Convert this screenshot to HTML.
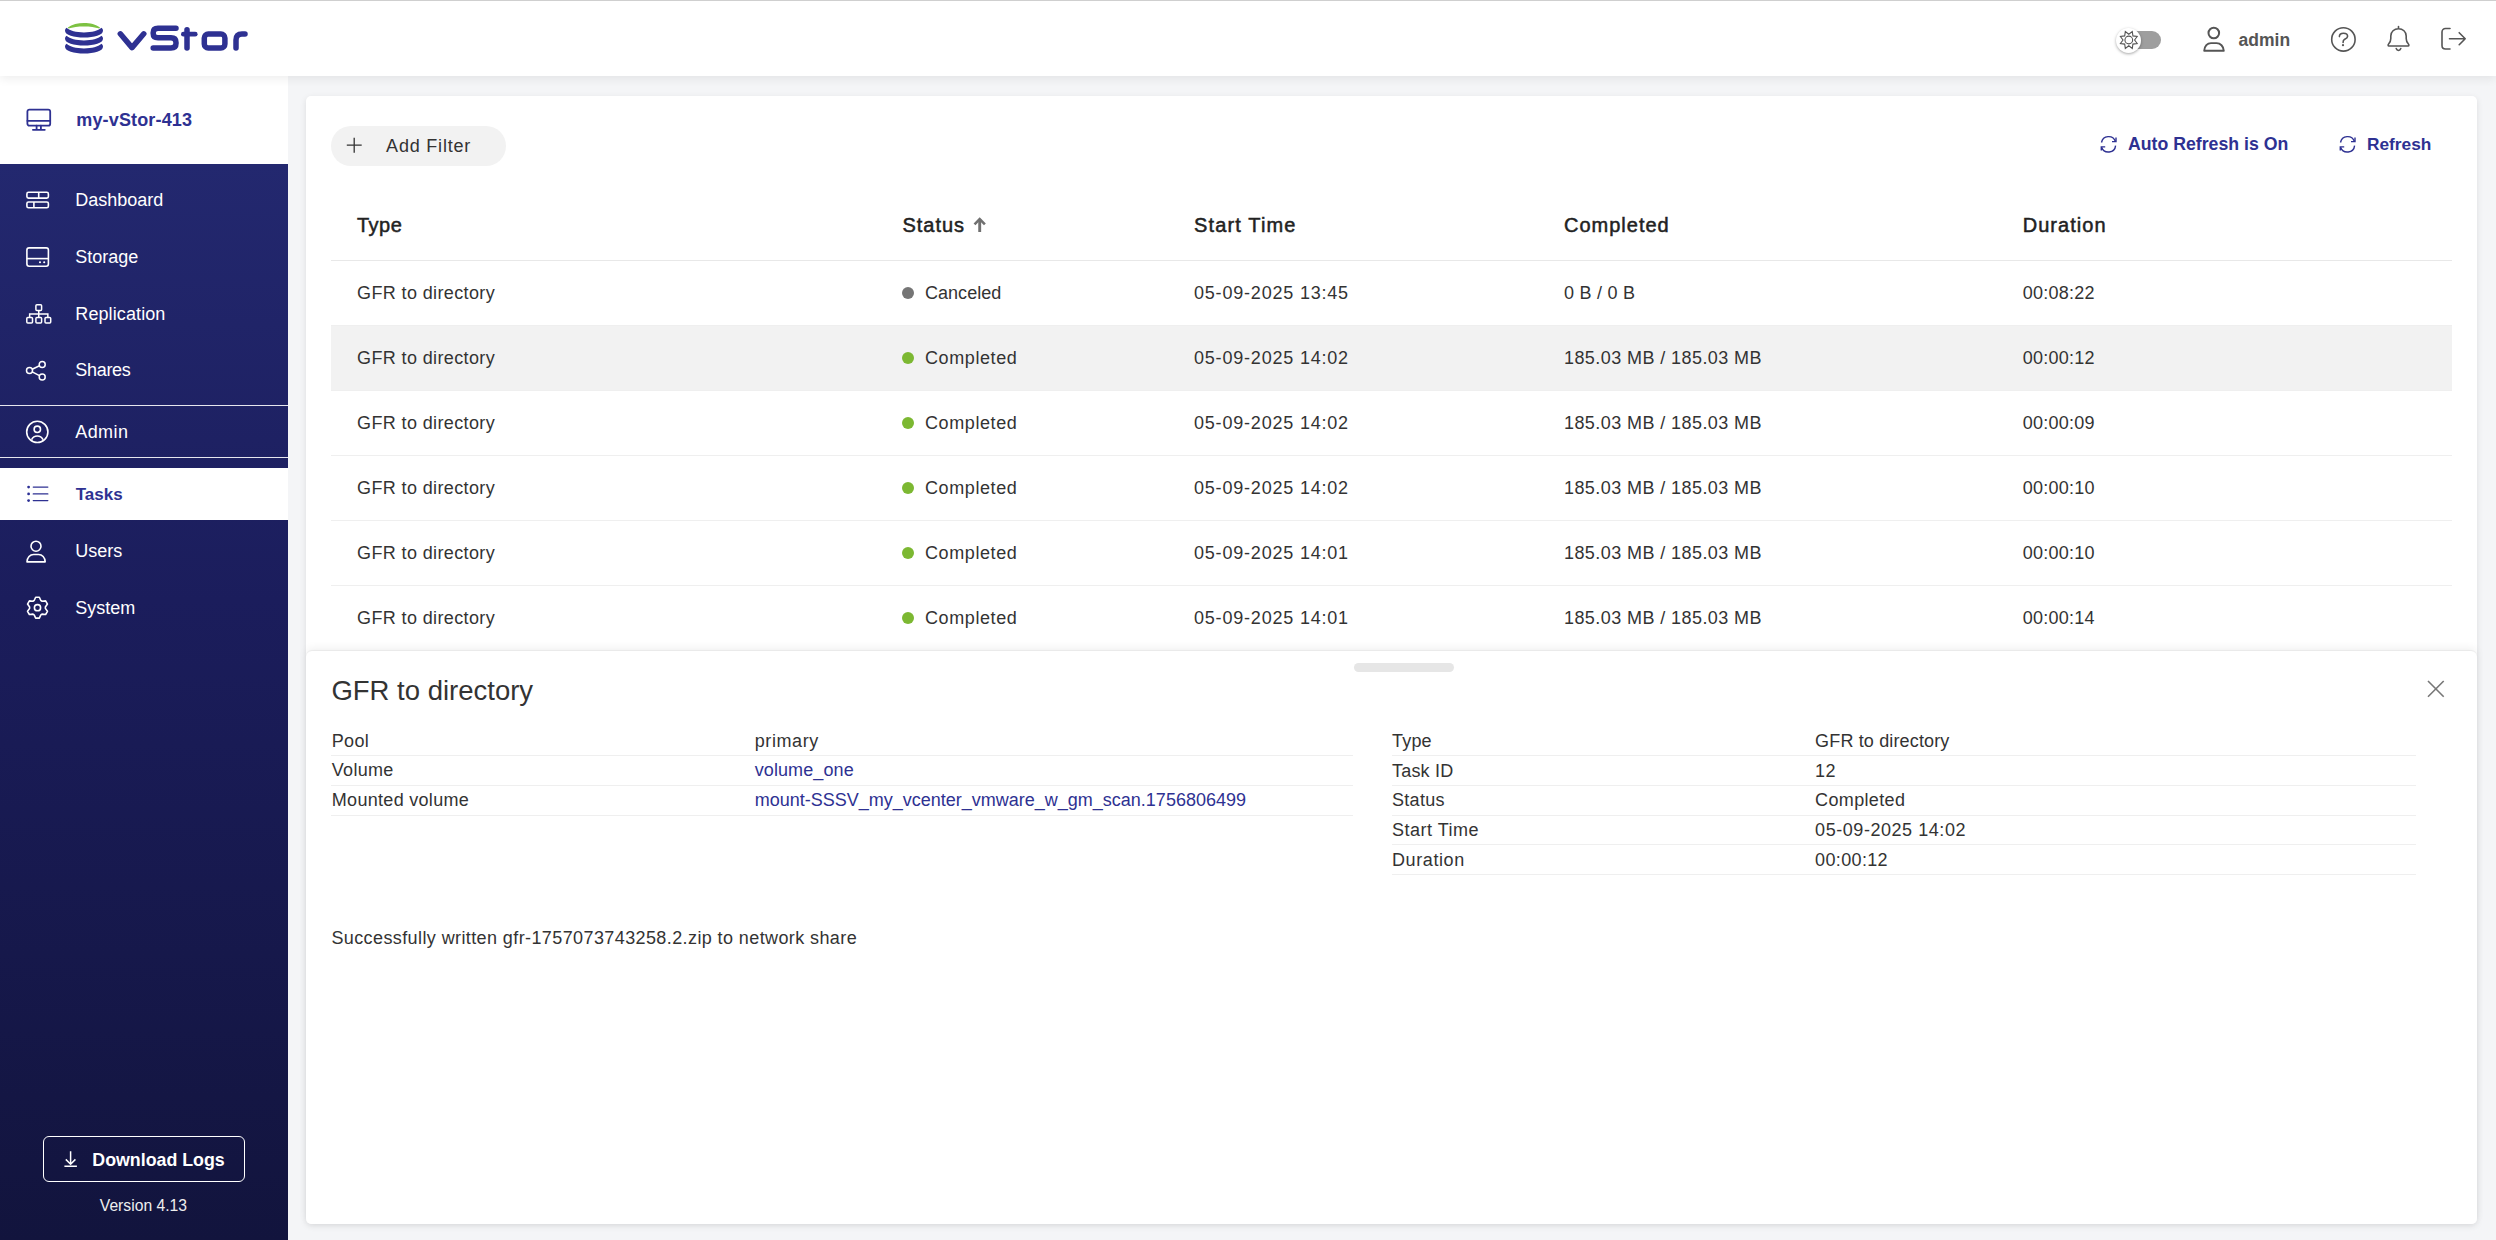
<!DOCTYPE html>
<html><head><meta charset="utf-8"><title>vStor Tasks</title><style>
*{margin:0;padding:0;box-sizing:border-box}
html,body{width:2496px;height:1240px;overflow:hidden;background:#f4f5f7;font-family:"Liberation Sans",sans-serif}
.abs{position:absolute}
.t{position:absolute;line-height:1;white-space:nowrap}
#topline{position:absolute;left:0;top:0;width:2496px;height:1px;background:#cfcfcf}
#hdr{position:absolute;left:0;top:0;width:2496px;height:76px;background:#fff;box-shadow:0 3px 9px rgba(0,0,0,.07)}
#sb{position:absolute;left:0;top:76px;width:288px;height:1164px;background:linear-gradient(to bottom,#fff 0,#fff 88px,#23286f 88px,#1b1d5c 45%,#12143d 100%)}
#card{position:absolute;left:306px;top:96px;width:2171px;height:1128px;background:#fff;border-radius:5px;box-shadow:0 2px 6px rgba(0,0,0,.1)}
#panel{position:absolute;left:306px;top:651px;width:2171px;height:573px;background:#fff;border-radius:6px;box-shadow:0 -1px 1px rgba(0,0,0,.05),0 -3px 8px rgba(0,0,0,.06)}
</style></head><body>
<div id="sb"></div>
<svg class="abs" style="left:24px;top:106px" width="30" height="28" viewBox="0 0 30 28">
<rect x="3.4" y="3.6" width="22.8" height="16.1" rx="2" fill="none" stroke="#2e3192" stroke-width="1.8"/>
<path d="M3.4,14.8 H26.2 M12.6,19.7 V23.2 M16.9,19.7 V23.2 M8.9,23.8 H20.8" fill="none" stroke="#2e3192" stroke-width="1.8" stroke-linecap="round"/>
</svg>
<div class="t" style="left:76.3px;top:110.96px;font-size:18px;font-weight:700;color:#2e3192;letter-spacing:0.15px;">my-vStor-413</div>
<svg class="abs" style="left:24px;top:188px" width="28" height="24" viewBox="0 0 28 24">
<rect x="2.9" y="4.3" width="21.5" height="5.8" rx="1.6" fill="none" stroke="#fff" stroke-width="1.6"/>
<rect x="2.9" y="14" width="21.5" height="5.8" rx="1.6" fill="none" stroke="#fff" stroke-width="1.6"/>
<path d="M14.7,4.3 V10.1 M9.9,14 V19.8" stroke="#fff" stroke-width="1.6"/>
</svg>
<div class="t" style="left:75.3px;top:190.76px;font-size:18px;font-weight:400;color:#fff;">Dashboard</div>
<svg class="abs" style="left:24px;top:244px" width="28" height="26" viewBox="0 0 28 26">
<rect x="2.9" y="3.9" width="21.5" height="18.4" rx="2.2" fill="none" stroke="#fff" stroke-width="1.6"/>
<path d="M2.9,14.6 H24.4" stroke="#fff" stroke-width="1.6"/>
<circle cx="16" cy="18.2" r="1.05" fill="#fff"/><circle cx="20.2" cy="18.2" r="1.05" fill="#fff"/>
</svg>
<div class="t" style="left:75.3px;top:248.36px;font-size:18px;font-weight:400;color:#fff;">Storage</div>
<svg class="abs" style="left:24px;top:301px" width="30" height="26" viewBox="0 0 30 26">
<g fill="none" stroke="#fff" stroke-width="1.5">
<rect x="11.9" y="3.8" width="5.7" height="5.6" rx="1"/>
<rect x="2.8" y="16.4" width="5.7" height="5.6" rx="1"/>
<rect x="11.9" y="16.4" width="5.7" height="5.6" rx="1"/>
<rect x="21" y="16.4" width="5.7" height="5.6" rx="1"/>
<path d="M14.75,9.4 V16.4 M5.65,16.4 V12.9 H23.85 V16.4"/>
</g>
</svg>
<div class="t" style="left:75.3px;top:305.06px;font-size:18px;font-weight:400;color:#fff;letter-spacing:0.1px;">Replication</div>
<svg class="abs" style="left:24px;top:357px" width="26" height="26" viewBox="0 0 26 26">
<g fill="none" stroke="#fff" stroke-width="1.5">
<circle cx="5.5" cy="13.6" r="3"/><circle cx="18.2" cy="7.5" r="3"/><circle cx="18.2" cy="20" r="3"/>
<path d="M8.2,12.3 L15.5,8.8 M8.2,14.9 L15.5,18.7"/>
</g>
</svg>
<div class="t" style="left:75.3px;top:360.96px;font-size:18px;font-weight:400;color:#fff;letter-spacing:-0.3px;">Shares</div>
<div class="abs" style="left:0;top:404.5px;width:288px;height:1.5px;background:#e6e6ee"></div>
<svg class="abs" style="left:24px;top:418px" width="28" height="28" viewBox="0 0 28 28">
<g fill="none" stroke="#fff" stroke-width="1.6">
<circle cx="13.3" cy="13.9" r="10.6"/>
<circle cx="13.3" cy="11.3" r="3.2"/>
<path d="M7.6,21.7 C8.8,19.2 10.8,18 13.3,18 C15.8,18 17.8,19.2 19,21.7"/>
</g>
</svg>
<div class="t" style="left:75.3px;top:422.96px;font-size:18px;font-weight:400;color:#fff;letter-spacing:0.4px;">Admin</div>
<div class="abs" style="left:0;top:456.5px;width:288px;height:1.5px;background:#e6e6ee"></div>
<div class="abs" style="left:0;top:468px;width:288px;height:52px;background:#fff"></div>
<svg class="abs" style="left:24px;top:480px" width="28" height="26" viewBox="0 0 28 26">
<g fill="#2b2f95"><circle cx="4.6" cy="7.1" r="1.4"/><circle cx="4.6" cy="13.9" r="1.4"/><circle cx="4.6" cy="20.6" r="1.4"/></g>
<path d="M9.3,7.1 H23.8 M9.3,13.9 H23.8 M9.3,20.6 H23.8" stroke="#2e3192" stroke-width="1.4" stroke-linecap="round"/>
</svg>
<div class="t" style="left:75.7px;top:485.61px;font-size:17px;font-weight:700;color:#2e3192;">Tasks</div>
<svg class="abs" style="left:24px;top:538px" width="26" height="28" viewBox="0 0 26 28">
<g fill="none" stroke="#fff" stroke-width="1.6">
<circle cx="12" cy="8.2" r="5"/>
<path d="M3,23.9 C3.2,19.6 6,16.5 9.6,16.5 H14.6 C18.2,16.5 21,19.6 21.2,23.9 Z" stroke-linejoin="round"/>
</g>
</svg>
<div class="t" style="left:75.3px;top:542.06px;font-size:18px;font-weight:400;color:#fff;">Users</div>
<svg class="abs" style="left:24px;top:594px" width="28" height="28" viewBox="0 0 28 28">
<g fill="none" stroke="#fff" stroke-width="1.6" stroke-linejoin="round">
<path d="M10.16,6.54 L11.66,3.26 L15.34,3.26 L16.84,6.54 A7.9,7.9 0 0 1 18.03,7.23 L21.62,6.89 L23.46,10.07 L21.37,13.01 A7.9,7.9 0 0 1 21.37,14.39 L23.46,17.33 L21.62,20.51 L18.03,20.17 A7.9,7.9 0 0 1 16.84,20.86 L15.34,24.14 L11.66,24.14 L10.16,20.86 A7.9,7.9 0 0 1 8.97,20.17 L5.38,20.51 L3.54,17.33 L5.63,14.39 A7.9,7.9 0 0 1 5.63,13.01 L3.54,10.07 L5.38,6.89 L8.97,7.23 A7.9,7.9 0 0 1 10.16,6.54 Z"/>
<circle cx="13.5" cy="13.7" r="3.1"/>
</g>
</svg>
<div class="t" style="left:75.3px;top:598.96px;font-size:18px;font-weight:400;color:#fff;">System</div>
<div class="abs" style="left:43px;top:1135.5px;width:202px;height:46.5px;border:1.5px solid #fff;border-radius:6px"></div>
<svg class="abs" style="left:60px;top:1148px" width="22" height="22" viewBox="0 0 22 22">
<path d="M10.6,3.2 V16 M5.8,11.4 L10.6,16.2 L15.4,11.4 M4.4,18.3 H16.9" fill="none" stroke="#fff" stroke-width="1.5"/>
</svg>
<div class="t" style="left:92.3px;top:1151.53px;font-size:17.8px;font-weight:700;color:#fff;">Download Logs</div>
<div class="t" style="left:99.8px;top:1197.71px;font-size:15.7px;font-weight:400;color:#eee;">Version 4.13</div>
<div id="card"></div>
<div class="abs" style="left:331px;top:126px;width:175px;height:40px;border-radius:20px;background:#f2f2f2"></div>
<svg class="abs" style="left:344px;top:135px" width="20" height="20" viewBox="0 0 20 20">
<path d="M10.2,2.8 V17.7 M2.8,10.2 H17.7" stroke="#333" stroke-width="1.3"/>
</svg>
<div class="t" style="left:386.1px;top:137.16px;font-size:18px;font-weight:400;color:#333;letter-spacing:0.8px;">Add Filter</div>
<svg class="abs" style="left:2099px;top:134.6px" width="20" height="20" viewBox="0 0 20 20">
<g fill="none" stroke="#2e3192" stroke-width="1.4" stroke-linecap="butt" stroke-linejoin="miter">
<path d="M2.5,7.5 A7.25,7.25 0 0 1 16.4,6.3"/>
<path d="M16.6,10.6 A7.25,7.25 0 0 1 2.6,12.3"/>
<path d="M17,2.5 V6.6 H13"/>
<path d="M2.3,15.4 V11.9 H6.2"/>
</g>
</svg>
<div class="t" style="left:2128px;top:135.82px;font-size:17.7px;font-weight:700;color:#2e3192;">Auto Refresh is On</div>
<svg class="abs" style="left:2338px;top:134.6px" width="20" height="20" viewBox="0 0 20 20">
<g fill="none" stroke="#2e3192" stroke-width="1.4" stroke-linecap="butt" stroke-linejoin="miter">
<path d="M2.5,7.5 A7.25,7.25 0 0 1 16.4,6.3"/>
<path d="M16.6,10.6 A7.25,7.25 0 0 1 2.6,12.3"/>
<path d="M17,2.5 V6.6 H13"/>
<path d="M2.3,15.4 V11.9 H6.2"/>
</g>
</svg>
<div class="t" style="left:2367px;top:136.16px;font-size:17.3px;font-weight:700;color:#2e3192;">Refresh</div>
<div class="t" style="left:357px;top:215.07px;font-size:20px;font-weight:400;color:#222;letter-spacing:0.5px;-webkit-text-stroke:0.5px #222;">Type</div>
<div class="t" style="left:902.4px;top:215.07px;font-size:20px;font-weight:400;color:#222;letter-spacing:1.0px;-webkit-text-stroke:0.5px #222;">Status</div>
<div class="t" style="left:1194px;top:215.07px;font-size:20px;font-weight:400;color:#222;letter-spacing:1.15px;-webkit-text-stroke:0.5px #222;">Start Time</div>
<div class="t" style="left:1564px;top:215.07px;font-size:20px;font-weight:400;color:#222;letter-spacing:1.0px;-webkit-text-stroke:0.5px #222;">Completed</div>
<div class="t" style="left:2022.7px;top:215.07px;font-size:20px;font-weight:400;color:#222;letter-spacing:1.05px;-webkit-text-stroke:0.5px #222;">Duration</div>
<svg class="abs" style="left:971px;top:216px" width="18" height="18" viewBox="0 0 18 18">
<path d="M8.7,3.2 V16" stroke="#707070" stroke-width="2.9"/>
<path d="M3.5,8.3 L8.7,3.1 L13.9,8.3" fill="none" stroke="#707070" stroke-width="2.6" stroke-linejoin="miter"/>
</svg>
<div class="abs" style="left:331px;top:260px;width:2121px;height:1px;background:#e8e8e8"></div>
<div class="abs" style="left:331px;top:325px;width:2121px;height:65px;background:#f2f2f2"></div>
<div class="abs" style="left:331px;top:325px;width:2121px;height:1px;background:#efefef"></div>
<div class="abs" style="left:331px;top:390px;width:2121px;height:1px;background:#efefef"></div>
<div class="abs" style="left:331px;top:455px;width:2121px;height:1px;background:#efefef"></div>
<div class="abs" style="left:331px;top:520px;width:2121px;height:1px;background:#efefef"></div>
<div class="abs" style="left:331px;top:585px;width:2121px;height:1px;background:#efefef"></div>
<div class="t" style="left:357px;top:283.76px;font-size:18px;font-weight:400;color:#333;letter-spacing:0.38px;">GFR to directory</div>
<div class="abs" style="left:902px;top:287px;width:12px;height:12px;border-radius:50%;background:#757575"></div>
<div class="t" style="left:925px;top:283.76px;font-size:18px;font-weight:400;color:#333;letter-spacing:0.03px;">Canceled</div>
<div class="t" style="left:1194px;top:283.76px;font-size:18px;font-weight:400;color:#333;letter-spacing:0.8px;">05-09-2025 13:45</div>
<div class="t" style="left:1564px;top:283.76px;font-size:18px;font-weight:400;color:#333;letter-spacing:0.25px;">0 B / 0 B</div>
<div class="t" style="left:2022.7px;top:283.76px;font-size:18px;font-weight:400;color:#333;letter-spacing:0.25px;">00:08:22</div>
<div class="t" style="left:357px;top:348.76px;font-size:18px;font-weight:400;color:#333;letter-spacing:0.38px;">GFR to directory</div>
<div class="abs" style="left:902px;top:352px;width:12px;height:12px;border-radius:50%;background:#7cb832"></div>
<div class="t" style="left:925px;top:348.76px;font-size:18px;font-weight:400;color:#333;letter-spacing:0.6px;">Completed</div>
<div class="t" style="left:1194px;top:348.76px;font-size:18px;font-weight:400;color:#333;letter-spacing:0.8px;">05-09-2025 14:02</div>
<div class="t" style="left:1564px;top:348.76px;font-size:18px;font-weight:400;color:#333;letter-spacing:0.42px;">185.03 MB / 185.03 MB</div>
<div class="t" style="left:2022.7px;top:348.76px;font-size:18px;font-weight:400;color:#333;letter-spacing:0.25px;">00:00:12</div>
<div class="t" style="left:357px;top:413.76px;font-size:18px;font-weight:400;color:#333;letter-spacing:0.38px;">GFR to directory</div>
<div class="abs" style="left:902px;top:417px;width:12px;height:12px;border-radius:50%;background:#7cb832"></div>
<div class="t" style="left:925px;top:413.76px;font-size:18px;font-weight:400;color:#333;letter-spacing:0.6px;">Completed</div>
<div class="t" style="left:1194px;top:413.76px;font-size:18px;font-weight:400;color:#333;letter-spacing:0.8px;">05-09-2025 14:02</div>
<div class="t" style="left:1564px;top:413.76px;font-size:18px;font-weight:400;color:#333;letter-spacing:0.42px;">185.03 MB / 185.03 MB</div>
<div class="t" style="left:2022.7px;top:413.76px;font-size:18px;font-weight:400;color:#333;letter-spacing:0.25px;">00:00:09</div>
<div class="t" style="left:357px;top:478.76px;font-size:18px;font-weight:400;color:#333;letter-spacing:0.38px;">GFR to directory</div>
<div class="abs" style="left:902px;top:482px;width:12px;height:12px;border-radius:50%;background:#7cb832"></div>
<div class="t" style="left:925px;top:478.76px;font-size:18px;font-weight:400;color:#333;letter-spacing:0.6px;">Completed</div>
<div class="t" style="left:1194px;top:478.76px;font-size:18px;font-weight:400;color:#333;letter-spacing:0.8px;">05-09-2025 14:02</div>
<div class="t" style="left:1564px;top:478.76px;font-size:18px;font-weight:400;color:#333;letter-spacing:0.42px;">185.03 MB / 185.03 MB</div>
<div class="t" style="left:2022.7px;top:478.76px;font-size:18px;font-weight:400;color:#333;letter-spacing:0.25px;">00:00:10</div>
<div class="t" style="left:357px;top:543.76px;font-size:18px;font-weight:400;color:#333;letter-spacing:0.38px;">GFR to directory</div>
<div class="abs" style="left:902px;top:547px;width:12px;height:12px;border-radius:50%;background:#7cb832"></div>
<div class="t" style="left:925px;top:543.76px;font-size:18px;font-weight:400;color:#333;letter-spacing:0.6px;">Completed</div>
<div class="t" style="left:1194px;top:543.76px;font-size:18px;font-weight:400;color:#333;letter-spacing:0.8px;">05-09-2025 14:01</div>
<div class="t" style="left:1564px;top:543.76px;font-size:18px;font-weight:400;color:#333;letter-spacing:0.42px;">185.03 MB / 185.03 MB</div>
<div class="t" style="left:2022.7px;top:543.76px;font-size:18px;font-weight:400;color:#333;letter-spacing:0.25px;">00:00:10</div>
<div class="t" style="left:357px;top:608.76px;font-size:18px;font-weight:400;color:#333;letter-spacing:0.38px;">GFR to directory</div>
<div class="abs" style="left:902px;top:612px;width:12px;height:12px;border-radius:50%;background:#7cb832"></div>
<div class="t" style="left:925px;top:608.76px;font-size:18px;font-weight:400;color:#333;letter-spacing:0.6px;">Completed</div>
<div class="t" style="left:1194px;top:608.76px;font-size:18px;font-weight:400;color:#333;letter-spacing:0.8px;">05-09-2025 14:01</div>
<div class="t" style="left:1564px;top:608.76px;font-size:18px;font-weight:400;color:#333;letter-spacing:0.42px;">185.03 MB / 185.03 MB</div>
<div class="t" style="left:2022.7px;top:608.76px;font-size:18px;font-weight:400;color:#333;letter-spacing:0.25px;">00:00:14</div>
<div id="panel"></div>
<div class="abs" style="left:1354px;top:662.5px;width:100px;height:9px;border-radius:4.5px;background:#e6e6e6"></div>
<div class="t" style="left:331.4px;top:676.72px;font-size:27.5px;font-weight:400;color:#333;">GFR to directory</div>
<svg class="abs" style="left:2424px;top:677px" width="24" height="24" viewBox="0 0 24 24">
<path d="M4,4 L19.7,19.8 M19.7,4 L4,19.8" stroke="#777" stroke-width="1.6"/>
</svg>
<div class="t" style="left:331.8px;top:731.76px;font-size:18px;font-weight:400;color:#333;letter-spacing:0.3px;">Pool</div>
<div class="t" style="left:754.7px;top:731.76px;font-size:18px;font-weight:400;color:#333;letter-spacing:0.6px;">primary</div>
<div class="abs" style="left:331px;top:755px;width:1022px;height:1px;background:#efefef"></div>
<div class="t" style="left:331.8px;top:761.46px;font-size:18px;font-weight:400;color:#333;letter-spacing:0.3px;">Volume</div>
<div class="t" style="left:754.7px;top:761.46px;font-size:18px;font-weight:400;color:#2e3192;letter-spacing:0.1px;">volume_one</div>
<div class="abs" style="left:331px;top:785px;width:1022px;height:1px;background:#efefef"></div>
<div class="t" style="left:331.8px;top:791.16px;font-size:18px;font-weight:400;color:#333;letter-spacing:0.3px;">Mounted volume</div>
<div class="t" style="left:754.7px;top:791.16px;font-size:18px;font-weight:400;color:#2e3192;">mount-SSSV_my_vcenter_vmware_w_gm_scan.1756806499</div>
<div class="abs" style="left:331px;top:815px;width:1022px;height:1px;background:#efefef"></div>
<div class="t" style="left:1392px;top:732.16px;font-size:18px;font-weight:400;color:#333;letter-spacing:0.2px;">Type</div>
<div class="t" style="left:1815.1px;top:732.16px;font-size:18px;font-weight:400;color:#333;letter-spacing:0.15px;">GFR to directory</div>
<div class="abs" style="left:1392px;top:755.0px;width:1024px;height:1px;background:#efefef"></div>
<div class="t" style="left:1392px;top:761.76px;font-size:18px;font-weight:400;color:#333;letter-spacing:0.2px;">Task ID</div>
<div class="t" style="left:1815.1px;top:761.76px;font-size:18px;font-weight:400;color:#333;letter-spacing:0.35px;">12</div>
<div class="abs" style="left:1392px;top:784.8px;width:1024px;height:1px;background:#efefef"></div>
<div class="t" style="left:1392px;top:791.36px;font-size:18px;font-weight:400;color:#333;letter-spacing:0.3px;">Status</div>
<div class="t" style="left:1815.1px;top:791.36px;font-size:18px;font-weight:400;color:#333;letter-spacing:0.35px;">Completed</div>
<div class="abs" style="left:1392px;top:814.6px;width:1024px;height:1px;background:#efefef"></div>
<div class="t" style="left:1392px;top:820.96px;font-size:18px;font-weight:400;color:#333;letter-spacing:0.5px;">Start Time</div>
<div class="t" style="left:1815.1px;top:820.96px;font-size:18px;font-weight:400;color:#333;letter-spacing:0.55px;">05-09-2025 14:02</div>
<div class="abs" style="left:1392px;top:844.4px;width:1024px;height:1px;background:#efefef"></div>
<div class="t" style="left:1392px;top:850.56px;font-size:18px;font-weight:400;color:#333;letter-spacing:0.6px;">Duration</div>
<div class="t" style="left:1815.1px;top:850.56px;font-size:18px;font-weight:400;color:#333;letter-spacing:0.35px;">00:00:12</div>
<div class="abs" style="left:1392px;top:874.2px;width:1024px;height:1px;background:#efefef"></div>
<div class="t" style="left:331.4px;top:929.26px;font-size:18px;font-weight:400;color:#333;letter-spacing:0.4px;">Successfully written gfr-1757073743258.2.zip to network share</div>
<div id="hdr"></div>
<svg class="abs" style="left:0;top:0" width="260" height="76" viewBox="0 0 260 76">
<path fill="#7dc242" d="M67.8,27.6 C72,24.3 78,23 84,23 C90,23 96,24.3 100,27.6 L99.4,28.6 C95,27 90,26.4 84,26.4 C78,26.4 73,27 68.4,28.6 Z"/>
<g fill="#2e3192">
<path d="M65,30.8 C65,35.2 74,37.6 84,37.6 C94,37.6 103,35.2 103,30.8 C103,29.6 102.5,28.6 101.5,27.8 C98,30.6 92,32.5 84,32.5 C76,32.5 70,30.6 66.5,27.8 C65.5,28.6 65,29.6 65,30.8 Z"/>
<path transform="translate(0,8)" d="M65,30.8 C65,35.2 74,37.6 84,37.6 C94,37.6 103,35.2 103,30.8 C103,29.6 102.5,28.6 101.5,27.8 C98,30.6 92,32.5 84,32.5 C76,32.5 70,30.6 66.5,27.8 C65.5,28.6 65,29.6 65,30.8 Z"/>
<path transform="translate(0,16)" d="M65,30.8 C65,35.2 74,37.6 84,37.6 C94,37.6 103,35.2 103,30.8 C103,29.6 102.5,28.6 101.5,27.8 C98,30.6 92,32.5 84,32.5 C76,32.5 70,30.6 66.5,27.8 C65.5,28.6 65,29.6 65,30.8 Z"/>
</g>
<g fill="none" stroke="#2e3192" stroke-width="5.5" stroke-linecap="round" stroke-linejoin="round">
<path d="M120.3,33.8 L132,47.6 L143.8,33.8"/>
<path d="M176,28.2 H158 Q153.2,28.2 153.2,32.5 V33.5 Q153.2,37.8 158,37.8 H171 Q176,37.8 176,42.5 V43.5 Q176,48 171,48 H153.2"/>
<path d="M187,29.8 V47.9"/>
<path d="M183.4,34.2 H195.2" stroke-width="4.8"/>
<rect x="204.3" y="34.1" width="20.6" height="13.9" rx="4"/>
<path d="M236,47.9 V40 Q236,34 242,34 H245"/>
</g>
</svg>
<div class="abs" style="left:2118px;top:31px;width:43px;height:18px;border-radius:9px;background:#9e9e9e"></div>
<div class="abs" style="left:2116px;top:28px;width:25px;height:25px;border-radius:50%;background:#fff;box-shadow:0 1px 3px rgba(0,0,0,.35)"></div>
<svg class="abs" style="left:2116px;top:28px" width="25" height="25" viewBox="0 0 25 25">
<path fill="none" stroke="#555" stroke-width="1.1" stroke-linejoin="miter" d="M16.28,3.59 L16.90,7.90 L21.21,8.52 L18.60,12.00 L21.21,15.48 L16.90,16.10 L16.28,20.41 L12.80,17.80 L9.32,20.41 L8.70,16.10 L4.39,15.48 L7.00,12.00 L4.39,8.52 L8.70,7.90 L9.32,3.59 L12.80,6.20 Z"/>
<circle cx="12.8" cy="12" r="3.85" fill="none" stroke="#555" stroke-width="1.1"/>
</svg>
<svg class="abs" style="left:2200px;top:24px" width="28" height="30" viewBox="0 0 28 30">
<circle cx="13.8" cy="9" r="5.3" fill="none" stroke="#555" stroke-width="2"/>
<path d="M4.2,26.8 C4.4,22.2 7.4,19.1 11,19.1 H16.6 C20.4,19.1 23.5,22.2 23.8,26.8 Z" fill="none" stroke="#555" stroke-width="1.9" stroke-linejoin="round"/>
</svg>
<div class="t" style="left:2238.6px;top:31.59px;font-size:17.5px;font-weight:700;color:#555;">admin</div>
<svg class="abs" style="left:2328px;top:24px" width="32" height="32" viewBox="0 0 32 32">
<circle cx="15.4" cy="15.4" r="11.7" fill="none" stroke="#555" stroke-width="1.6"/>
<path d="M11.4,12.6 C11.4,10.3 13,9.2 15.5,9.2 C18,9.2 19.6,10.5 19.6,12.2 C19.6,14 17.6,14.8 16.2,15.6 C15.3,16.2 15.1,17 15.1,18.4" fill="none" stroke="#555" stroke-width="1.6" stroke-linecap="round"/>
<circle cx="15" cy="21.2" r="1.1" fill="#555"/>
</svg>
<svg class="abs" style="left:2384px;top:24px" width="30" height="30" viewBox="0 0 30 30">
<path d="M14.5,2.5 V4.8 M5,22 C4,21.8 3.8,20.8 4.6,20 C6,18.6 6.8,17.5 6.8,14.5 V12 C6.8,7.6 10.2,4.8 14.5,4.8 C18.8,4.8 22.2,7.6 22.2,12 V14.5 C22.2,17.5 23,18.6 24.4,20 C25.2,20.8 25,21.8 24,22 Z M12.2,24.6 C12.6,25.8 13.4,26.5 14.5,26.5 C15.6,26.5 16.4,25.8 16.8,24.6" fill="none" stroke="#555" stroke-width="1.6" stroke-linejoin="round" stroke-linecap="round"/>
</svg>
<svg class="abs" style="left:2438px;top:24px" width="32" height="30" viewBox="0 0 32 30">
<path d="M12,4.5 H7.5 C5.5,4.5 4,6 4,8 V21.5 C4,23.5 5.5,25 7.5,25 H12" fill="none" stroke="#555" stroke-width="1.6" stroke-linecap="round"/>
<path d="M11.5,14.7 H27.2 M21.2,8.7 L27.2,14.7 L21.2,20.7" fill="none" stroke="#555" stroke-width="1.6" stroke-linecap="round" stroke-linejoin="round"/>
</svg>
<div id="topline"></div>
</body></html>
